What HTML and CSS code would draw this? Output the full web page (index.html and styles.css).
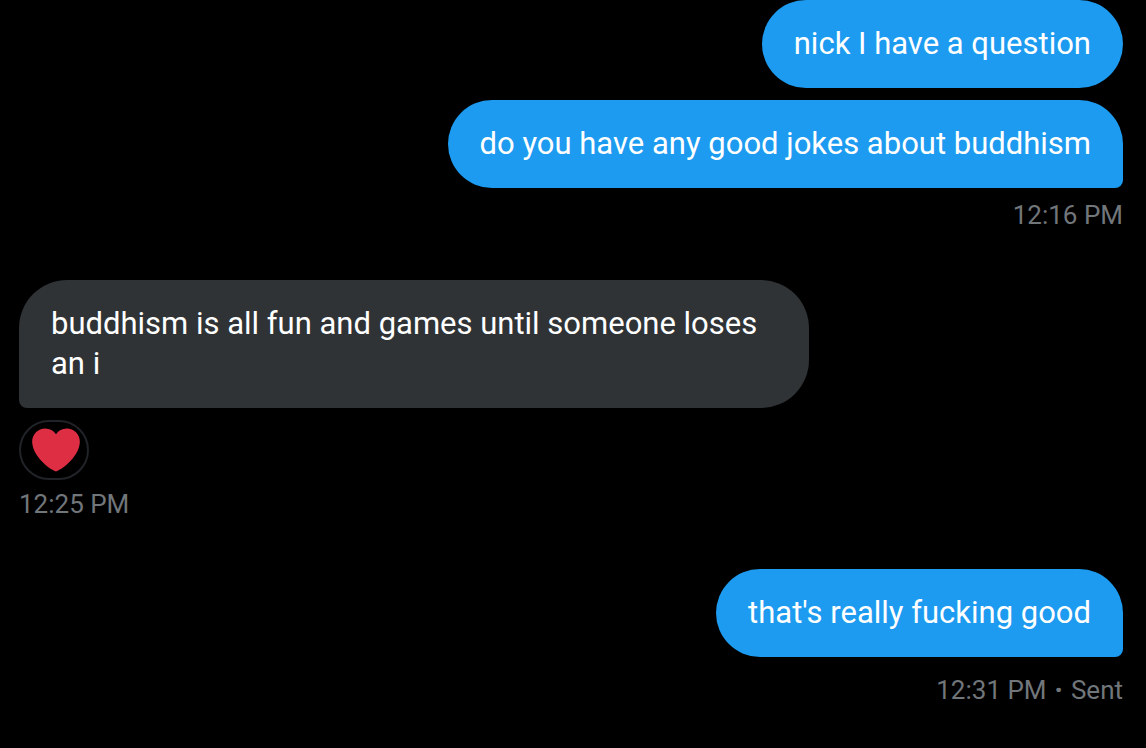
FILE: index.html
```html
<!DOCTYPE html>
<html lang="en">
<head>
<meta charset="utf-8">
<meta name="viewport" content="width=device-width, initial-scale=1">
<title>Messages</title>
<link rel="stylesheet" href="styles.css">
</head>
<body>
<main class="thread">
  <section class="group sent">
    <p class="bubble">nick I have a question</p>
    <p class="bubble tail">do you have any good jokes about buddhism</p>
    <div class="meta"><time>12:16 PM</time></div>
  </section>
  <section class="group received">
    <p class="bubble tail">buddhism is all fun and games until someone loses an i</p>
    <div class="footer">
      <button class="reaction" type="button" aria-label="Heart reaction">
        <svg class="heart" viewBox="0 0 36 36" aria-hidden="true"><path fill="#DD2E44" d="M35.885 11.833c0-5.45-4.418-9.868-9.867-9.868-3.308 0-6.227 1.633-8.018 4.129-1.791-2.496-4.71-4.129-8.017-4.129-5.45 0-9.868 4.417-9.868 9.868 0 .772.098 1.52.266 2.241C1.751 22.587 11.216 31.568 18 34.034c6.783-2.466 16.249-11.447 17.617-19.959.17-.721.268-1.469.268-2.242z"/></svg>
      </button>
      <div class="meta"><time>12:25 PM</time></div>
    </div>
  </section>
  <section class="group sent">
    <p class="bubble tail">that's really fucking good</p>
    <div class="meta status"><time>12:31 PM</time><span class="dot">·</span><span>Sent</span></div>
  </section>
</main>
</body>
</html>
```
FILE: styles.css
```css
* { box-sizing: border-box; }
body {
  margin: 0;
  background: #000;
  color: #fff;
  font-family: Roboto, "Noto Sans", sans-serif;
}
.thread {
  display: flex;
  flex-direction: column;
  gap: 50px;
  padding: 0 23px 40px 19px;
}
.group {
  display: flex;
  flex-direction: column;
  align-items: flex-start;
  gap: 12px;
}
.sent { align-items: flex-end; }
.bubble {
  margin: 0;
  max-width: 790px;
  padding: 24px 32px;
  border-radius: 44px;
  background: #1d9bf0;
  font-size: 31px;
  line-height: 40px;
}
.sent .tail { border-bottom-right-radius: 8px; }
.received .bubble { background: #2f3336; border-radius: 48px; }
.received .tail { border-bottom-left-radius: 8px; }
.footer {
  display: flex;
  flex-direction: column;
  gap: 9px;
}
.reaction {
  display: flex;
  align-items: center;
  justify-content: flex-end;
  width: 70px;
  height: 60px;
  padding: 0 7px;
  border: 2px solid #202327;
  border-radius: 30px;
  background: #000;
}
.heart { width: 48px; height: 48px; }
.meta {
  display: flex;
  gap: 8px;
  color: #71767b;
  font-size: 26px;
  line-height: 30px;
}
.status { padding-top: 6px; }
.dot { font-weight: 900; }
```
